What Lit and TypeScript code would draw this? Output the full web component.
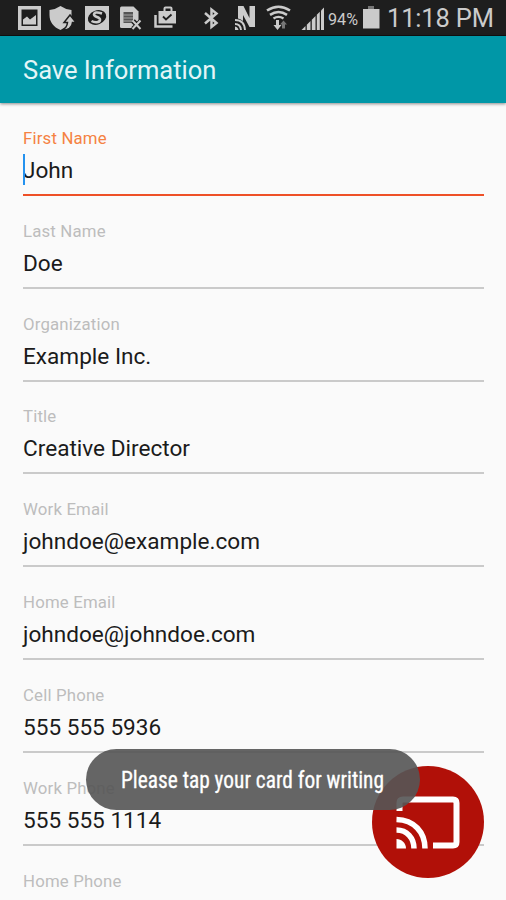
import { LitElement, html, css, svg } from "lit";
import { customElement, property } from "lit/decorators.js";
import { classMap } from "lit/directives/class-map.js";

@customElement("status-bar")
class StatusBar extends LitElement {
  static styles = css`
    :host { display: block; height: 35px; background: #1e1e1e; border-bottom: 1px solid #111; }
    svg { display: block; width: 506px; height: 35px; fill: #cbcbcb; }
    text { font-family: Roboto, sans-serif; }
    .dark { fill: #1e1e1e; }
    .line { fill: none; stroke: #cbcbcb; }
    .cut { fill: none; stroke: #1e1e1e; }
    .dim { fill: #777; }
    .clock { font-size: 25.5px; }
    .percent { font-size: 17px; }
  `;
  render() {
    return html`<svg viewBox="0 0 506 35">
      ${svg`
      <path fill-rule="evenodd" d="M18 6h23v24H18zM21.500 9.500v16.500h16v-16.500z"/>
      <path d="M23 24.500v-5l4-3 3 3 6-4.500v9.500z"/>
      <path d="M49.500 10q6-.500 11-4 5 3.500 11 4v5c0 7-4 12-11 15-7-3-11-8-11-15z"/>
      <path stroke="#1e1e1e" stroke-width="1.500" d="M62 30q5-2 5.500-7.500h-3.500l6-7.500 6 7.500h-3.500q-.500 7.500-10.500 7.500z"/>
      <path d="M85 6h24v24H85z"/>
      <ellipse class="dark" cx="97" cy="17.500" rx="9.500" ry="7" transform="rotate(-22 97 17.500)"/>
      <path class="line" stroke-width="2.600" d="M102 13.500q-7.500-2.500-8 1c0 3 6.500 2 6 5.500-.500 3-6 2.500-8.500 1"/>
      <path d="M121.500 6.500h12l5 5v10l-4 6.500h-13q-1.500 0-1.500-1.500v-18q0-2 1.500-2z"/>
      <path fill="#555" d="M123.500 12h9.500v11h-9.500z"/>
      <path class="line" stroke-width=".7" d="M123.500 15h9.500M123.500 18h9.500M123.500 21h9.500"/>
      <path class="cut" stroke-width="5" d="M133 21l8 8M141 21l-8 8"/>
      <path class="line" stroke-width="2" d="M132.500 20.500l8 8.500M140.500 20.500l-8 8.500"/>
      <path fill-rule="evenodd" d="M158.500 11h5V8.500q0-2 2-2h5q2 0 2 2V11h3.500v12.500h-17.500zM165.500 11h5V8.500h-5z"/>
      <path class="cut" stroke-width="1.800" d="M163 16.500l3 3 5.500-5"/>
      <path class="line" stroke-width="2.500" d="M155.500 15v11.500h17"/>
      <path class="line" stroke-width="2.500" d="M205 13l11.500 10-5 4V9.500l5 4L205 23.500"/>
      <path d="M238 6h5.500l6 12V6h5.500v21h-5.500l-6.500-12v6q-2-2-5-2.500z"/>
      <path class="line" stroke-width="1.900" d="M235 20q9.500 0 10 10M235 24q5.500 0 6 6"/><path d="M235 26.500q3 .5 3.500 3.500H235z"/>
      <path class="line" stroke-width="2.600" d="M267 10.500q11.500-7.500 23 0M270 14.800q8.500-5.500 17 0"/>
      <path class="line" stroke-width="2.400" d="M273.500 18.500q5-3.300 10 0"/>
      <path d="M276 20h3v5h2.500l-4 5-4-5h2.500z"/>
      <path class="dim" d="M282 28.500v-4h-2l3.500-4 3.500 4h-2v4z"/>
      <path d="M301.500 30l4-4v4zM306.800 30v-5.300l3.700-3.700v9zM311.800 30V19.700l3.700-3.700v14zM316.800 30V14.700l3-3v18.300z"/><path d="M321 30V10.500L324 7.500v22.500z"/>
      <text class="percent" x="328" y="24.500" textLength="30" lengthAdjust="spacingAndGlyphs">94%</text>
      <path class="dim" d="M368 6h6v3h-6z"/><path d="M363 9h16.500v19.500H363z"/>
      <text class="clock" x="387" y="26.800" textLength="107" lengthAdjust="spacing">11:18 PM</text>
      `}
    </svg>`;
  }
}

@customElement("form-field")
class FormField extends LitElement {
  @property() label = "";
  @property() value = "";
  @property({ type: Boolean }) active = false;
  static styles = css`
    .field { height: 92.83px; box-sizing: border-box; font-family: Roboto, sans-serif; }
    .label { height: 22px; line-height: 22px; font-size: 16.800px; letter-spacing: .17px; color: #bdbdbd; }
    .value { display: flex; align-items: center; position: relative; height: 43px; font-size: 22.600px; line-height: 43px; color: #1b1b1b; white-space: pre; }
    .rule { height: 2px; background: #cacaca; margin-top: 2px; }
    .active .label { color: #f58242; }
    .active .rule { background: #ee5027; }
    .caret { position: absolute; left: 0; top: 5px; width: 2px; height: 31px; background: #2492ef; }
  `;
  render() {
    return html`<div class=${classMap({ field: true, active: this.active })}>
      <div class="label">${this.label}</div>
      <div class="value">${this.value}${this.active ? html`<span class="caret"></span>` : ""}</div>
      <div class="rule"></div>
    </div>`;
  }
}

@customElement("app-root")
class AppRoot extends LitElement {
  static styles = css`
    :host { display: block; position: relative; width: 506px; height: 900px; overflow: hidden; background: #fafafa; font-family: Roboto, sans-serif; }
    header { height: 67px; line-height: 69px; padding-left: 23px; font-size: 25.500px; background: #0097a7; color: #e4f5f7; box-shadow: 0 1px 3px rgba(0,0,0,.45); }
    main { padding: 24px 22px 0 23px; }
    .cast { position: absolute; left: 372px; top: 765.5px; width: 112px; height: 112px; border: 0; border-radius: 50%; background: #b11008; padding: 0; }
    .cast svg { display: block; width: 112px; height: 112px; }
    .toast { position: absolute; left: 86px; top: 749px; width: 334px; height: 61px; border-radius: 31px; background: rgba(86,86,86,.91); }
    .toast svg { display: block; width: 334px; height: 61px; }
    .toast text { font-family: "Roboto Condensed", Roboto, sans-serif; font-size: 23px; fill: #fff; stroke: #fff; stroke-width: .3px; }
  `;
  private fields = [
    ["First Name", "John"], ["Last Name", "Doe"], ["Organization", "Example Inc."],
    ["Title", "Creative Director"], ["Work Email", "johndoe@example.com"],
    ["Home Email", "johndoe@johndoe.com"], ["Cell Phone", "555 555 5936"],
    ["Work Phone", "555 555 1114"], ["Home Phone", ""],
  ];
  render() {
    return html`
      <status-bar></status-bar>
      <header>Save Information</header>
      <main>${this.fields.map(([label, value], i) => html`<form-field .label=${label} .value=${value} .active=${i === 0}></form-field>`)}</main>
      <button class="cast" aria-label="Write card">
        <svg viewBox="0 0 112 112" fill="none" stroke="#fff" stroke-width="6">
          <path d="M27.500 45V37q0-3.500 3.500-3.500h50q3.500 0 3.500 3.500v39q0 3.500-3.500 3.500H61"/>
          <path stroke-width="5.500" d="M24.500 53.500C42 54 53 66 53 82.500M24.500 64C35 64 42 72 42 82.500"/>
          <path fill="#fff" stroke="none" d="M24.500 73c5 0 9.500 4 9.500 9.500h-9.500z"/>
        </svg>
      </button>
      <div class="toast"><svg viewBox="0 0 334 61"><text x="35" y="39" textLength="263" lengthAdjust="spacingAndGlyphs">Please tap your card for writing</text></svg></div>`;
  }
}
